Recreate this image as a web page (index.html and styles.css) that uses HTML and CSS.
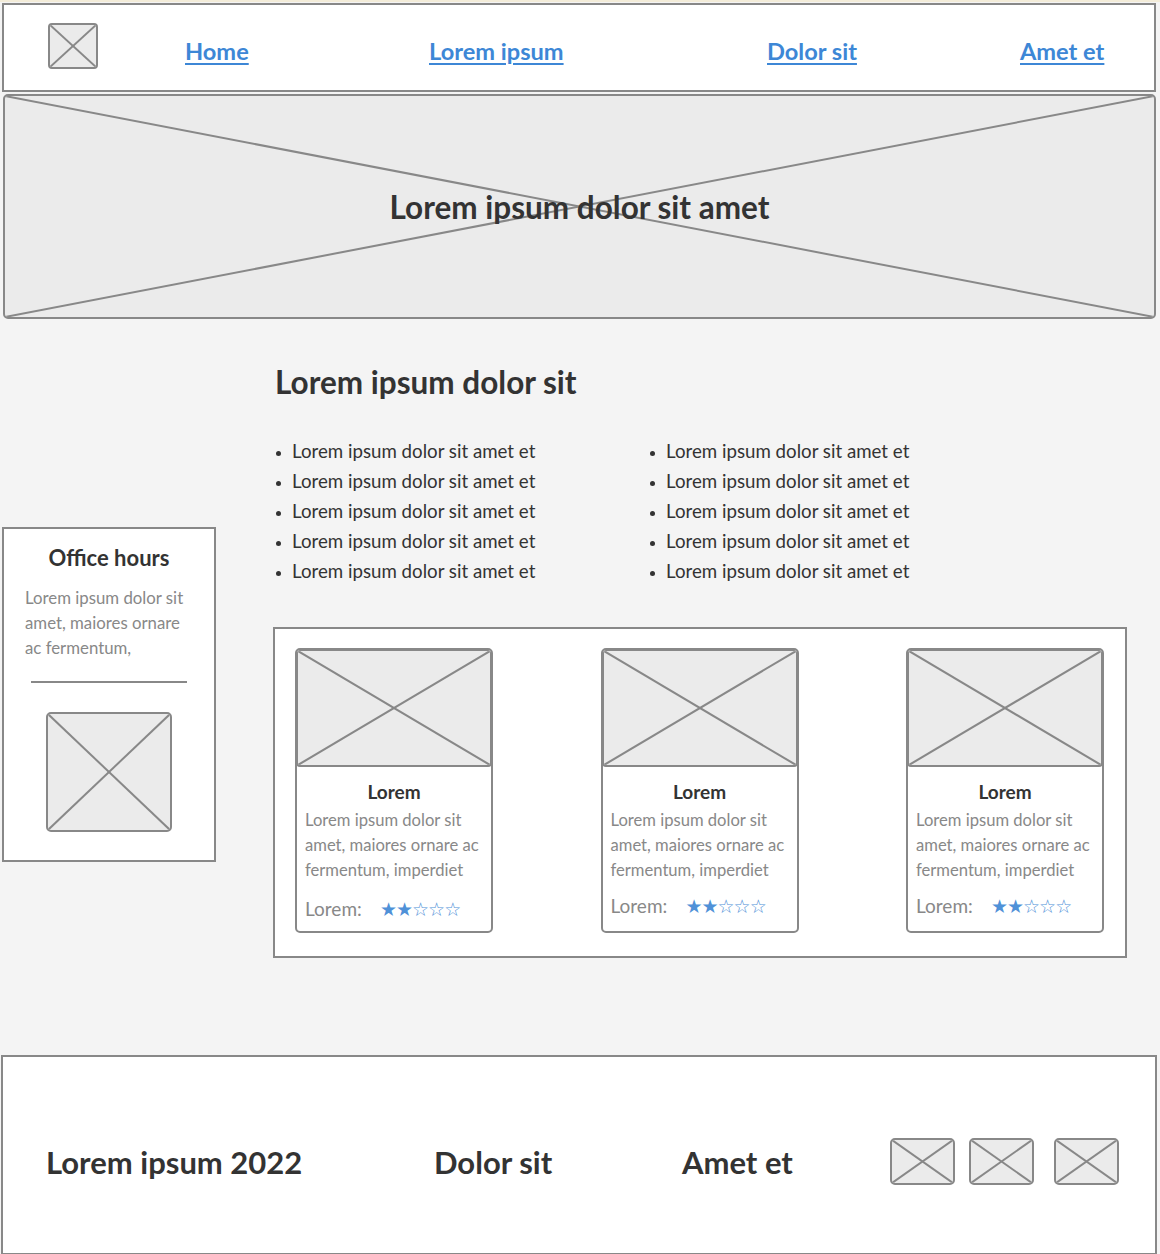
FILE: index.html
```html
<!DOCTYPE html>
<html lang="en">
<head>
<meta charset="utf-8">
<title>Wireframe</title>
<link rel="stylesheet" href="styles.css">
</head>
<body>
<header class="topbar">
  <div class="ph logo"><svg viewBox="0 0 10 10" preserveAspectRatio="none"><line x1="0" y1="0" x2="10" y2="10"/><line x1="10" y1="0" x2="0" y2="10"/></svg></div>
  <nav class="nav">
    <a href="#">Home</a>
    <a href="#">Lorem ipsum</a>
    <a href="#">Dolor sit</a>
    <a href="#">Amet et</a>
  </nav>
</header>

<section class="hero ph">
  <svg viewBox="0 0 10 10" preserveAspectRatio="none"><line x1="0" y1="0" x2="10" y2="10"/><line x1="10" y1="0" x2="0" y2="10"/></svg>
  <h1 class="hero-title">Lorem ipsum dolor sit amet</h1>
</section>

<main class="main">
  <aside class="office">
    <h3 class="office-title">Office hours</h3>
    <p class="office-text">Lorem ipsum dolor sit amet, maiores ornare ac fermentum,</p>
    <hr class="office-rule">
    <div class="ph office-img"><svg viewBox="0 0 10 10" preserveAspectRatio="none"><line x1="0" y1="0" x2="10" y2="10"/><line x1="10" y1="0" x2="0" y2="10"/></svg></div>
  </aside>

  <div class="content">
    <h2 class="content-title">Lorem ipsum dolor sit</h2>
    <div class="lists">
      <ul class="list">
        <li>Lorem ipsum dolor sit amet et</li>
        <li>Lorem ipsum dolor sit amet et</li>
        <li>Lorem ipsum dolor sit amet et</li>
        <li>Lorem ipsum dolor sit amet et</li>
        <li>Lorem ipsum dolor sit amet et</li>
      </ul>
      <ul class="list">
        <li>Lorem ipsum dolor sit amet et</li>
        <li>Lorem ipsum dolor sit amet et</li>
        <li>Lorem ipsum dolor sit amet et</li>
        <li>Lorem ipsum dolor sit amet et</li>
        <li>Lorem ipsum dolor sit amet et</li>
      </ul>
    </div>

    <div class="cards">
      <article class="card">
        <div class="ph card-img"><svg viewBox="0 0 10 10" preserveAspectRatio="none"><line x1="0" y1="0" x2="10" y2="10"/><line x1="10" y1="0" x2="0" y2="10"/></svg></div>
        <h4 class="card-title">Lorem</h4>
        <p class="card-text">Lorem ipsum dolor sit amet, maiores ornare ac fermentum, imperdiet</p>
        <div class="rating rating-low"><span class="rating-label">Lorem:</span><span class="stars">★★☆☆☆</span></div>
      </article>
      <article class="card">
        <div class="ph card-img"><svg viewBox="0 0 10 10" preserveAspectRatio="none"><line x1="0" y1="0" x2="10" y2="10"/><line x1="10" y1="0" x2="0" y2="10"/></svg></div>
        <h4 class="card-title">Lorem</h4>
        <p class="card-text">Lorem ipsum dolor sit amet, maiores ornare ac fermentum, imperdiet</p>
        <div class="rating"><span class="rating-label">Lorem:</span><span class="stars">★★☆☆☆</span></div>
      </article>
      <article class="card">
        <div class="ph card-img"><svg viewBox="0 0 10 10" preserveAspectRatio="none"><line x1="0" y1="0" x2="10" y2="10"/><line x1="10" y1="0" x2="0" y2="10"/></svg></div>
        <h4 class="card-title">Lorem</h4>
        <p class="card-text">Lorem ipsum dolor sit amet, maiores ornare ac fermentum, imperdiet</p>
        <div class="rating"><span class="rating-label">Lorem:</span><span class="stars">★★☆☆☆</span></div>
      </article>
    </div>
  </div>
</main>

<footer class="footer">
  <div class="foot-item foot-copy">Lorem ipsum 2022</div>
  <div class="foot-item foot-dolor">Dolor sit</div>
  <div class="foot-item foot-amet">Amet et</div>
  <div class="foot-icons">
    <div class="ph foot-icon"><svg viewBox="0 0 10 10" preserveAspectRatio="none"><line x1="0" y1="0" x2="10" y2="10"/><line x1="10" y1="0" x2="0" y2="10"/></svg></div>
    <div class="ph foot-icon"><svg viewBox="0 0 10 10" preserveAspectRatio="none"><line x1="0" y1="0" x2="10" y2="10"/><line x1="10" y1="0" x2="0" y2="10"/></svg></div>
    <div class="ph foot-icon foot-icon-last"><svg viewBox="0 0 10 10" preserveAspectRatio="none"><line x1="0" y1="0" x2="10" y2="10"/><line x1="10" y1="0" x2="0" y2="10"/></svg></div>
  </div>
</footer>
</body>
</html>
```

FILE: styles.css
```css
* { box-sizing: border-box; }

html, body {
  margin: 0;
  padding: 0;
  background: #f4f4f4;
}

body {
  font-family: Lato, "Open Sans", "Liberation Sans", sans-serif;
  color: #333;
  border-top: 2px solid #f3ecd9;
  width: 1160px;
  overflow: hidden;
}

/* generic placeholder */
.ph {
  position: relative;
  background: #ebebeb;
  border: 2px solid #888;
  border-radius: 4px;
  overflow: hidden;
}
.ph > svg {
  position: absolute;
  inset: 0;
  width: 100%;
  height: 100%;
}
.ph line {
  stroke: #888;
  stroke-width: 2;
  vector-effect: non-scaling-stroke;
}

/* header */
.topbar {
  margin: 1px 4px 0 2px;
  height: 89px;
  background: #fff;
  border: 2px solid #888;
  display: flex;
  align-items: center;
  padding-left: 44px;
}
.logo {
  width: 50px;
  height: 46px;
  margin-top: -3px;
  border-radius: 4px;
}
.nav {
  margin-left: 87px;
  margin-top: 6px;
  display: grid;
  grid-template-columns: 244px 338px 253px auto;
  align-items: center;
}
.nav a {
  justify-self: start;
  color: #3d87d6;
  font-size: 23.6px;
  font-weight: 700;
  text-decoration: underline;
  text-underline-offset: 3px;
  text-decoration-thickness: 2px;
}

/* hero */
.hero {
  margin: 2px 4px 0 3px;
  height: 225px;
  border-radius: 5px;
  display: flex;
  align-items: center;
  justify-content: center;
}
.hero-title {
  position: relative;
  margin: 0;
  font-size: 31.5px;
  font-weight: 700;
  color: #333;
}

/* main */
.main {
  display: flex;
  align-items: flex-start;
  height: 736px;
}
.office {
  margin: 208px 0 0 2px;
  width: 214px;
  height: 335px;
  background: #fff;
  border: 2px solid #888;
  padding: 14px 0 0 0;
  display: flex;
  flex-direction: column;
  align-items: center;
}
.office-title {
  margin: 0;
  font-size: 22px;
  line-height: 30px;
  font-weight: 700;
  color: #333;
}
.office-text {
  margin: 12px 0 0 0;
  padding: 0 14px 0 21px;
  align-self: stretch;
  font-size: 16.8px;
  line-height: 25px;
  color: #888;
}
.office-rule {
  margin: 21px 0 0 0;
  width: 156px;
  border: 0;
  border-top: 2px solid #888;
}
.office-img {
  margin-top: 29px;
  width: 126px;
  height: 120px;
  border-radius: 5px;
}

.content {
  margin-left: 57px;
  width: 854px;
}
.content-title {
  margin: 45px 0 0 2px;
  font-size: 31.5px;
  line-height: 36px;
  font-weight: 700;
  color: #333;
}
.lists {
  display: flex;
  margin-top: 36px;
  padding-left: 2px;
}
.list {
  margin: 0;
  padding: 0 0 0 17px;
  width: 374px;
  font-size: 18.7px;
  line-height: 30px;
  color: #333;
}
.list li::marker { font-size: 14px; }

.cards {
  margin-top: 41px;
  height: 331px;
  background: #fff;
  border: 2px solid #888;
  padding: 19px 21px 0 20px;
  display: flex;
  justify-content: space-between;
  align-items: flex-start;
}
.card {
  width: 198px;
  height: 285px;
  background: #fff;
  border: 2px solid #888;
  border-radius: 5px;
  display: flex;
  flex-direction: column;
  overflow: hidden;
}
.card-img {
  margin: -1px -1px 0 -1px;
  height: 118px;
  border-radius: 4px;
  flex: none;
}
.card-title {
  margin: 14px 0 0 0;
  text-align: center;
  font-size: 19px;
  line-height: 22px;
  font-weight: 700;
  color: #333;
}
.card-text {
  margin: 5px 0 0 0;
  padding: 0 4px 0 8px;
  font-size: 16.6px;
  line-height: 25px;
  color: #888;
}
.rating {
  margin-top: 12px;
  padding-left: 8px;
  display: flex;
  align-items: center;
  color: #888;
  font-size: 19px;
  line-height: 22px;
}
.rating-low { margin-top: 15px; }
.rating-label { width: 75px; }
.stars {
  font-family: "DejaVu Sans", sans-serif;
  font-size: 19px;
  color: #4f91d8;
  letter-spacing: -1px;
}

/* footer */
.footer {
  margin: 0 3px 0 1px;
  height: 200px;
  background: #fff;
  border: 2px solid #888;
  display: flex;
  align-items: center;
  padding: 14px 0 0 43px;
}
.foot-item {
  font-size: 31px;
  font-weight: 700;
  color: #333;
}
.foot-copy { width: 388px; }
.foot-dolor { width: 248px; }
.foot-amet { width: 208px; }
.foot-icons {
  display: flex;
  margin-top: -1px;
}
.foot-icon {
  width: 65px;
  height: 47px;
  border-radius: 5px;
  margin-right: 14px;
}
.foot-icon-last { margin-left: 6px; margin-right: 0; }
```
